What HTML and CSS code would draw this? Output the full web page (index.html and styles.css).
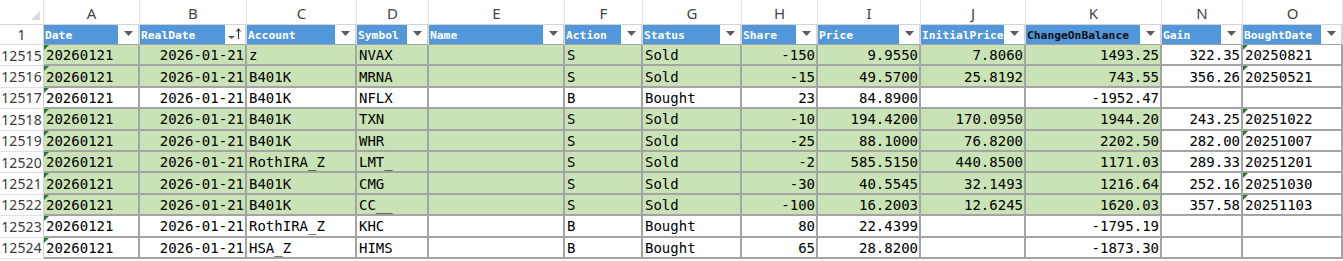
FILE: index.html
```html
<!DOCTYPE html>
<html>
<head>
<meta charset="utf-8">
<link rel="stylesheet" href="styles.css">
</head>
<body>
<div class="sheet">
  <div class="corner"><span class="selall"></span></div>
  <div class="col">A</div><div class="col">B</div><div class="col">C</div><div class="col">D</div><div class="col">E</div><div class="col">F</div><div class="col">G</div><div class="col">H</div><div class="col">I</div><div class="col">J</div><div class="col">K</div><div class="col">N</div><div class="col">O</div>

  <div class="rn">1</div>
  <div class="h"><span class="lbl">Date</span><span class="fb"><svg width="9" height="5" viewBox="0 0 9 5"><path d="M0 0H9L4.5 5Z" fill="#5a5a5a"/></svg></span></div>
  <div class="h"><span class="lbl">RealDate</span><span class="fb"><svg width="16" height="14" viewBox="0 0 16 14"><path d="M1 9H8L4.5 12Z" fill="#5a5a5a"/><path d="M11.5 12V2M9.5 4.5L11.5 2L13.5 4.5" stroke="#3a3a3a" stroke-width="1.2" fill="none"/></svg></span></div>
  <div class="h"><span class="lbl">Account</span><span class="fb"><svg width="9" height="5" viewBox="0 0 9 5"><path d="M0 0H9L4.5 5Z" fill="#5a5a5a"/></svg></span></div>
  <div class="h"><span class="lbl">Symbol</span><span class="fb"><svg width="9" height="5" viewBox="0 0 9 5"><path d="M0 0H9L4.5 5Z" fill="#5a5a5a"/></svg></span></div>
  <div class="h"><span class="lbl">Name</span><span class="fb"><svg width="9" height="5" viewBox="0 0 9 5"><path d="M0 0H9L4.5 5Z" fill="#5a5a5a"/></svg></span></div>
  <div class="h"><span class="lbl">Action</span><span class="fb"><svg width="9" height="5" viewBox="0 0 9 5"><path d="M0 0H9L4.5 5Z" fill="#5a5a5a"/></svg></span></div>
  <div class="h"><span class="lbl">Status</span><span class="fb"><svg width="9" height="5" viewBox="0 0 9 5"><path d="M0 0H9L4.5 5Z" fill="#5a5a5a"/></svg></span></div>
  <div class="h"><span class="lbl">Share</span><span class="fb"><svg width="9" height="5" viewBox="0 0 9 5"><path d="M0 0H9L4.5 5Z" fill="#5a5a5a"/></svg></span></div>
  <div class="h"><span class="lbl">Price</span><span class="fb"><svg width="9" height="5" viewBox="0 0 9 5"><path d="M0 0H9L4.5 5Z" fill="#5a5a5a"/></svg></span></div>
  <div class="h"><span class="lbl">InitialPrice</span><span class="fb"><svg width="9" height="5" viewBox="0 0 9 5"><path d="M0 0H9L4.5 5Z" fill="#5a5a5a"/></svg></span></div>
  <div class="h dark"><span class="lbl">ChangeOnBalance</span><span class="fb"><svg width="9" height="5" viewBox="0 0 9 5"><path d="M0 0H9L4.5 5Z" fill="#5a5a5a"/></svg></span></div>
  <div class="h"><span class="lbl">Gain</span><span class="fb"><svg width="9" height="5" viewBox="0 0 9 5"><path d="M0 0H9L4.5 5Z" fill="#5a5a5a"/></svg></span></div>
  <div class="h"><span class="lbl">BoughtDate</span><span class="fb"><svg width="9" height="5" viewBox="0 0 9 5"><path d="M0 0H9L4.5 5Z" fill="#5a5a5a"/></svg></span></div>

  <div class="rn">12515</div>
  <div class="c g t">20260121</div><div class="c g r">2026-01-21</div><div class="c g">z</div><div class="c g">NVAX</div><div class="c g"></div><div class="c g">S</div><div class="c g">Sold</div><div class="c g r">-150</div><div class="c g r">9.9550</div><div class="c g r">7.8060</div><div class="c g r">1493.25</div><div class="c r">322.35</div><div class="c t">20250821</div>

  <div class="rn">12516</div>
  <div class="c g t">20260121</div><div class="c g r">2026-01-21</div><div class="c g">B401K</div><div class="c g">MRNA</div><div class="c g"></div><div class="c g">S</div><div class="c g">Sold</div><div class="c g r">-15</div><div class="c g r">49.5700</div><div class="c g r">25.8192</div><div class="c g r">743.55</div><div class="c r">356.26</div><div class="c t">20250521</div>

  <div class="rn">12517</div>
  <div class="c t">20260121</div><div class="c r">2026-01-21</div><div class="c">B401K</div><div class="c">NFLX</div><div class="c"></div><div class="c">B</div><div class="c">Bought</div><div class="c r">23</div><div class="c r">84.8900</div><div class="c r"></div><div class="c r">-1952.47</div><div class="c r"></div><div class="c"></div>

  <div class="rn">12518</div>
  <div class="c g t">20260121</div><div class="c g r">2026-01-21</div><div class="c g">B401K</div><div class="c g">TXN</div><div class="c g"></div><div class="c g">S</div><div class="c g">Sold</div><div class="c g r">-10</div><div class="c g r">194.4200</div><div class="c g r">170.0950</div><div class="c g r">1944.20</div><div class="c r">243.25</div><div class="c t">20251022</div>

  <div class="rn">12519</div>
  <div class="c g t">20260121</div><div class="c g r">2026-01-21</div><div class="c g">B401K</div><div class="c g">WHR</div><div class="c g"></div><div class="c g">S</div><div class="c g">Sold</div><div class="c g r">-25</div><div class="c g r">88.1000</div><div class="c g r">76.8200</div><div class="c g r">2202.50</div><div class="c r">282.00</div><div class="c t">20251007</div>

  <div class="rn">12520</div>
  <div class="c g t">20260121</div><div class="c g r">2026-01-21</div><div class="c g">RothIRA_Z</div><div class="c g">LMT_</div><div class="c g"></div><div class="c g">S</div><div class="c g">Sold</div><div class="c g r">-2</div><div class="c g r">585.5150</div><div class="c g r">440.8500</div><div class="c g r">1171.03</div><div class="c r">289.33</div><div class="c">20251201</div>

  <div class="rn">12521</div>
  <div class="c g t">20260121</div><div class="c g r">2026-01-21</div><div class="c g">B401K</div><div class="c g">CMG</div><div class="c g"></div><div class="c g">S</div><div class="c g">Sold</div><div class="c g r">-30</div><div class="c g r">40.5545</div><div class="c g r">32.1493</div><div class="c g r">1216.64</div><div class="c r">252.16</div><div class="c t">20251030</div>

  <div class="rn">12522</div>
  <div class="c g t">20260121</div><div class="c g r">2026-01-21</div><div class="c g">B401K</div><div class="c g">CC__</div><div class="c g"></div><div class="c g">S</div><div class="c g">Sold</div><div class="c g r">-100</div><div class="c g r">16.2003</div><div class="c g r">12.6245</div><div class="c g r">1620.03</div><div class="c r">357.58</div><div class="c t">20251103</div>

  <div class="rn">12523</div>
  <div class="c t">20260121</div><div class="c r">2026-01-21</div><div class="c">RothIRA_Z</div><div class="c">KHC</div><div class="c"></div><div class="c">B</div><div class="c">Bought</div><div class="c r">80</div><div class="c r">22.4399</div><div class="c r"></div><div class="c r">-1795.19</div><div class="c r"></div><div class="c"></div>

  <div class="rn">12524</div>
  <div class="c t">20260121</div><div class="c r">2026-01-21</div><div class="c">HSA_Z</div><div class="c">HIMS</div><div class="c"></div><div class="c">B</div><div class="c">Bought</div><div class="c r">65</div><div class="c r">28.8200</div><div class="c r"></div><div class="c r">-1873.30</div><div class="c r"></div><div class="c"></div>
</div>
</body>
</html>
```

FILE: styles.css
```css
html, body {
  margin: 0;
  padding: 0;
  background: #ffffff;
}

.sheet {
  display: grid;
  grid-template-columns: 44px 96px 107px 110px 72px 136px 78px 99px 76px 103px 105px 136px 81px 100px;
  grid-template-rows: 25px 20px repeat(10, 21.4px);
  width: 1343px;
}

.corner {
  box-sizing: border-box;
  border-right: 1px solid #dedede;
  border-bottom: 1px solid #d4d4d4;
  display: flex;
  align-items: flex-end;
  justify-content: flex-end;
  padding: 0 3px 4px 0;
}

.selall {
  width: 0;
  height: 0;
  border-left: 9px solid transparent;
  border-bottom: 9px solid #dcdcdc;
}

.col {
  box-sizing: border-box;
  border-right: 1px solid #e2e2e2;
  border-bottom: 1px solid #d4d4d4;
  font-family: "Noto Sans", "Open Sans", sans-serif;
  font-size: 15px;
  color: #444444;
  display: flex;
  align-items: center;
  justify-content: center;
  padding-top: 1px;
}

.rn {
  box-sizing: border-box;
  border-right: 1px solid #d0d0d0;
  border-bottom: 1px solid #e0e0e0;
  font-family: "Noto Sans", "Open Sans", sans-serif;
  font-size: 14px;
  color: #3a3a3a;
  display: flex;
  align-items: center;
  justify-content: center;
  letter-spacing: 0.1px;
}

.h {
  box-sizing: border-box;
  background: #5197d9;
  border-right: 2px solid #cfd6de;
  border-bottom: 1px solid #a3a3a3;
  display: flex;
  align-items: stretch;
  font-family: "DejaVu Sans Mono", "Liberation Mono", monospace;
  font-weight: bold;
  font-size: 11.3px;
  color: #ffffff;
  overflow: hidden;
}

.h.dark {
  color: #111111;
}

.lbl {
  flex: 1;
  display: flex;
  align-items: center;
  padding-left: 1px;
  white-space: nowrap;
  overflow: hidden;
  padding-top: 1px;
}

.fb {
  width: 20px;
  flex: none;
  background: #ffffff;
  display: flex;
  align-items: center;
  justify-content: center;
  padding-bottom: 2px;
  box-sizing: border-box;
}

.c {
  position: relative;
  box-sizing: border-box;
  border-right: 2px solid #a4a4a4;
  border-bottom: 2px solid #a4a4a4;
  background: #ffffff;
  font-family: "DejaVu Sans Mono", "Liberation Mono", monospace;
  font-size: 14px;
  color: #000000;
  display: flex;
  align-items: center;
  padding: 1px 2px 0 2px;
  white-space: nowrap;
  overflow: hidden;
}

.c.g {
  background: #cae3b6;
}

.c.r {
  justify-content: flex-end;
  padding-right: 1px;
}

.c.t::before {
  content: "";
  position: absolute;
  left: 0;
  top: 0;
  width: 0;
  height: 0;
  border-top: 5px solid #1f7a36;
  border-right: 5px solid transparent;
}
```
